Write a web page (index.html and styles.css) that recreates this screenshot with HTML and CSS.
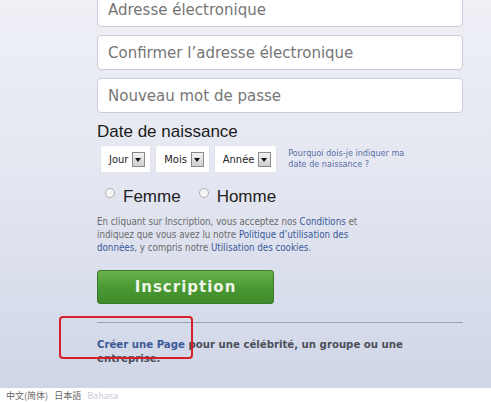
FILE: index.html
```html
<!DOCTYPE html>
<html lang="fr">
<head>
    <meta charset="UTF-8">
    <title>Inscription</title>
    <link rel="stylesheet" href="styles.css">
</head>
<body>
    <div class="signup">
        <form class="form">
            <input type="text" class="field first" placeholder="Adresse électronique">
            <input type="text" class="field" placeholder="Confirmer l’adresse électronique">
            <input type="password" class="field" placeholder="Nouveau mot de passe">

            <div class="birth-title">Date de naissance</div>
            <div class="birth-row">
                <span class="pick">Jour <i class="arrow"></i></span>
                <span class="pick">Mois <i class="arrow"></i></span>
                <span class="pick">Année <i class="arrow"></i></span>
                <a href="#" class="why">Pourquoi dois-je indiquer ma date de naissance ?</a>
            </div>

            <div class="gender">
                <label><span class="radio"></span>Femme</label>
                <label><span class="radio"></span>Homme</label>
            </div>

            <p class="legal">En cliquant sur Inscription, vous acceptez nos <a href="#">Conditions</a> et indiquez que vous avez lu notre <a href="#">Politique d’utilisation des données</a>, y compris notre <a href="#">Utilisation des cookies</a>.</p>

            <button type="button" class="submit">Inscription</button>
        </form>

        <div class="page-link">
            <span class="mark"></span>
            <p><a href="#">Créer une Page</a> pour une célébrité, un groupe ou une entreprise.</p>
        </div>
    </div>
    <div class="footer">中文(简体) &nbsp; 日本語 &nbsp; <span class="more">Bahasa</span></div>
</body>
</html>
```

FILE: styles.css
```css
body {
    margin: 0;
    font-family: "Liberation Sans", Arial, sans-serif;
    background: #fff;
    overflow: hidden;
}
.signup {
    height: 388px;
    background: linear-gradient(to bottom, #eff0f6, #e4e7f1 45%, #d0d6e7);
    padding-left: 97px;
    box-sizing: border-box;
}
.form {
    width: 366px;
    display: flex;
    flex-direction: column;
}
.field {
    height: 35px;
    margin-bottom: 8px;
    padding: 0 10px;
    border: 1px solid #c9ccd6;
    border-radius: 4px;
    background: #fff;
    font-family: "DejaVu Sans", Tahoma, sans-serif;
    font-size: 15px;
    box-sizing: border-box;
}
.field.first {
    margin-top: -8px;
}
.field::placeholder {
    color: #767676;
}
.birth-title {
    font-size: 17px;
    color: #1b1b1b;
    margin-top: 1px;
    line-height: 20px;
}
.birth-row {
    display: flex;
    align-items: center;
    gap: 4px;
    margin-top: 3px;
    margin-left: 3px;
}
.pick {
    display: flex;
    align-items: center;
    gap: 4px;
    height: 28px;
    padding: 0 5px 0 8px;
    background: #fff;
    border: 1px solid #e1e3ea;
    font-family: "DejaVu Sans Condensed", "DejaVu Sans", sans-serif;
    font-size: 11px;
    color: #222;
    box-sizing: border-box;
}
.arrow {
    width: 11px;
    height: 13px;
    border: 1px solid #8a8a8a;
    background: linear-gradient(#f2f2f2, #cfcfcf);
    position: relative;
}
.arrow::after {
    content: "";
    position: absolute;
    left: 2px;
    top: 5px;
    border-left: 3.5px solid transparent;
    border-right: 3.5px solid transparent;
    border-top: 4px solid #111;
}
.why {
    margin-left: 7px;
    width: 130px;
    font-family: "DejaVu Sans Condensed", "DejaVu Sans", sans-serif;
    font-size: 9px;
    line-height: 11px;
    color: #5a6fa6;
    text-decoration: none;
}
.gender {
    display: flex;
    gap: 18px;
    margin-top: 14px;
    margin-left: 8px;
    font-size: 17px;
    color: #222;
}
.gender label {
    display: flex;
    align-items: center;
}
.radio {
    width: 8px;
    height: 8px;
    border: 1px solid #b0b0b0;
    border-radius: 50%;
    background: #f4f4f4;
    margin-right: 8px;
    margin-top: -8px;
}
.legal {
    margin: 8px 0 0;
    width: 280px;
    font-family: "DejaVu Sans Condensed", "DejaVu Sans", sans-serif;
    font-size: 9.7px;
    line-height: 13px;
    color: #6a6a6a;
}
.legal a {
    color: #3b5998;
    text-decoration: none;
}
.submit {
    width: 177px;
    height: 34px;
    margin-top: 16px;
    border: 1px solid #3b7a2a;
    border-radius: 3px;
    background: linear-gradient(to bottom, #68b24b, #4a9a34 50%, #3d8a2a);
    color: #eef5e8;
    font-family: "DejaVu Sans", sans-serif;
    font-size: 15px;
    font-weight: bold;
    letter-spacing: 1px;
}
.page-link {
    width: 366px;
    margin-top: 18px;
    border-top: 1px solid #9ea3b3;
    position: relative;
}
.page-link p {
    margin: 15px 0 0;
    font-family: "DejaVu Sans Condensed", "DejaVu Sans", sans-serif;
    font-size: 11.3px;
    font-weight: bold;
    line-height: 14px;
    color: #4b4f5c;
}
.page-link a {
    color: #3b5998;
    text-decoration: none;
}
.mark {
    position: absolute;
    left: -38px;
    top: -7px;
    width: 130px;
    height: 39px;
    border: 2px solid #d4202a;
    border-radius: 4px;
}
.footer {
    padding: 2px 6px;
    font-family: "Noto Sans CJK SC", sans-serif;
    font-size: 9px;
    line-height: 11px;
    color: #666;
}
.footer .more {
    color: #ccd;
}
```
